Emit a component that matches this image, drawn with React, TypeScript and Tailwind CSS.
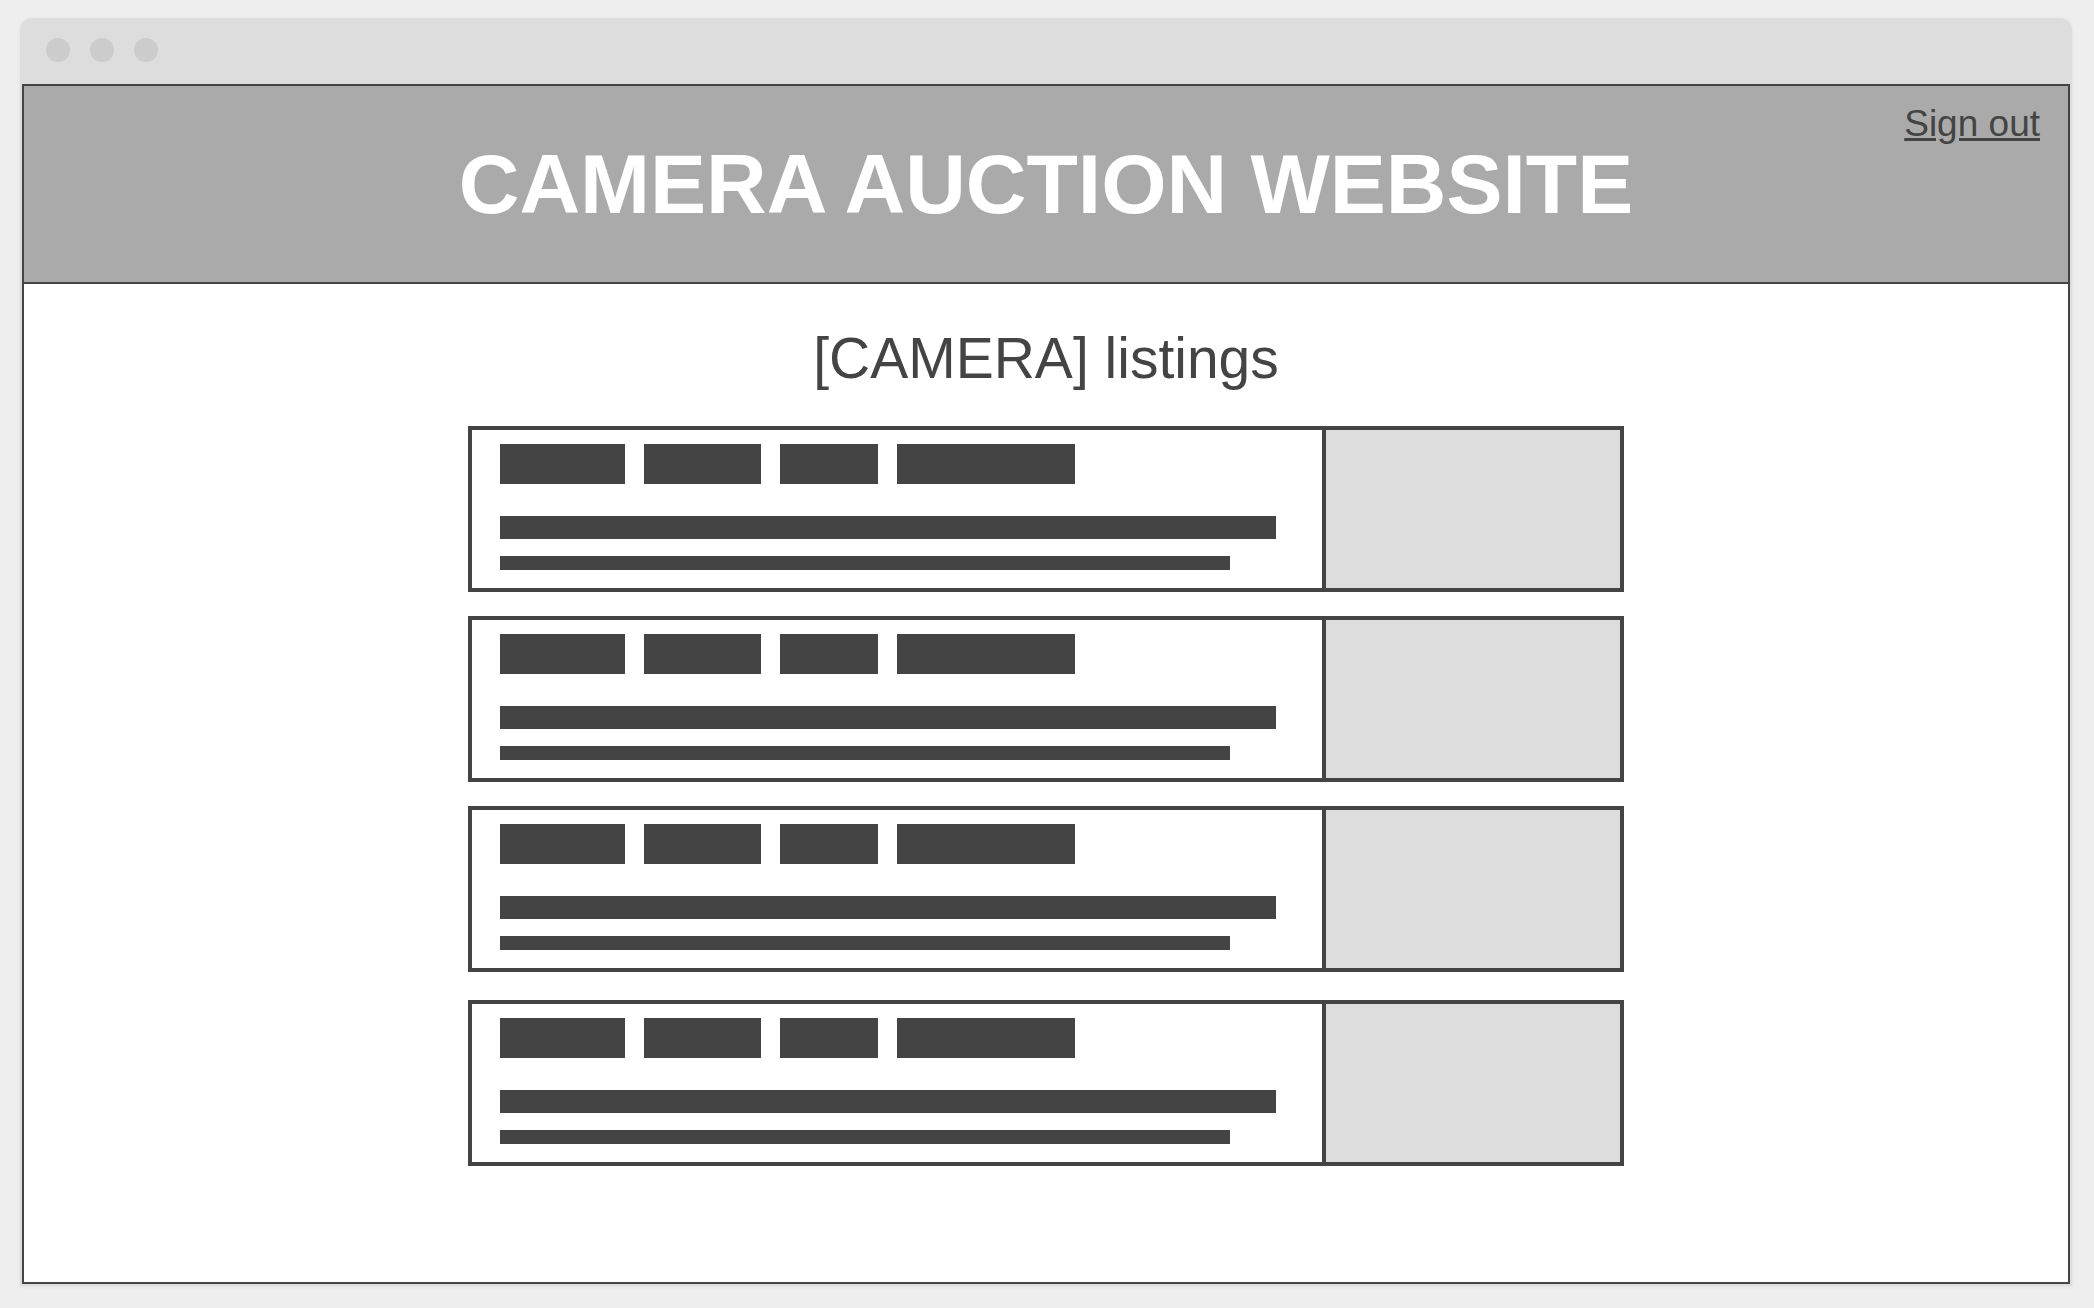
import React from "react";

/* ─── data ─── */
const listings = [
  { id: 1, gap: "mt-[36px]" },
  { id: 2, gap: "mt-[24px]" },
  { id: 3, gap: "mt-[24px]" },
  { id: 4, gap: "mt-[28px]" },
];

const tagWidths = ["w-[125px]", "w-[117px]", "w-[98px]", "w-[178px]"];

/* ─── listing card ─── */
function ListingCard({ gap }: { gap: string }) {
  return (
    <div className={`${gap} flex h-[166px] w-[1156px] border-4 border-[#444444] bg-white`}>
      <div className="flex-1 pl-[28px] pt-[14px]">
        <div className="flex gap-[19px]">
          {tagWidths.map((w) => (
            <div key={w} className={`${w} h-[40px] bg-[#444444]`} />
          ))}
        </div>
        <div className="mt-[32px] h-[23px] w-[776px] bg-[#444444]" />
        <div className="mt-[17px] h-[14px] w-[730px] bg-[#444444]" />
      </div>
      <div className="w-[298px] border-l-4 border-[#444444] bg-[#dddddd]" />
    </div>
  );
}

/* ─── page ─── */
export default function App() {
  return (
    <div
      className="min-h-screen bg-[#eeeeee] pl-[20px] pr-[22px] pt-[18px] pb-[22px]"
      style={{ fontFamily: '"Liberation Sans", Arial, sans-serif' }}
    >
      {/* window frame */}
      <div className="rounded-t-[12px] bg-[#dddddd] px-[2px] pb-[2px] shadow-[0_1px_4px_rgba(0,0,0,0.06)]">
        <div className="flex h-[66px] items-center gap-[20px] pb-[2px] pl-[24px]">
          <span className="h-[24px] w-[24px] rounded-full bg-[#cccccc]" />
          <span className="h-[24px] w-[24px] rounded-full bg-[#cccccc]" />
          <span className="h-[24px] w-[24px] rounded-full bg-[#cccccc]" />
        </div>

        <div className="flex h-[1200px] flex-col border-2 border-[#444444] bg-white">
          {/* header */}
          <header className="grid h-[198px] shrink-0 border-b-2 border-[#444444] bg-[#aaaaaa]">
            <h1 className="col-start-1 row-start-1 self-center justify-self-center text-[84px] font-bold text-white">
              CAMERA AUCTION WEBSITE
            </h1>
            <a
              href="#"
              className="col-start-1 row-start-1 mr-[28px] mt-[10px] self-start justify-self-end text-[37px] text-[#444444] underline"
            >
              Sign out
            </a>
          </header>

          {/* listings */}
          <section className="flex flex-col items-center pt-[42px]">
            <h2 className="text-[57px] leading-[64px] text-[#444444]">[CAMERA] listings</h2>
            {listings.map((l) => (
              <ListingCard key={l.id} gap={l.gap} />
            ))}
          </section>
        </div>
      </div>
    </div>
  );
}
